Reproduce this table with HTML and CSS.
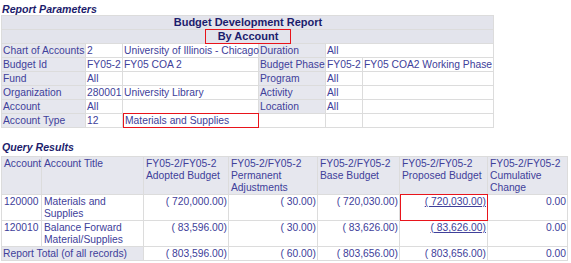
FILE: index.html
```html
<!DOCTYPE html>
<html>
<head>
<meta charset="utf-8">
<link rel="stylesheet" href="styles.css">
</head>
<body>
<div class="page">
  <div class="section-title">Report Parameters</div>
  <table class="params">
    <colgroup>
      <col class="c1"><col class="c2"><col class="c3"><col class="c4"><col class="c5"><col class="c6">
    </colgroup>
    <tr><td colspan="6" class="head">Budget Development Report</td></tr>
    <tr><td colspan="6" class="head"><span class="hl-box">By Account</span></td></tr>
    <tr><td class="lbl">Chart of Accounts</td><td>2</td><td>University of Illinois - Chicago</td><td class="lbl">Duration</td><td colspan="2">All</td></tr>
    <tr><td class="lbl">Budget Id</td><td>FY05-2</td><td>FY05 COA 2</td><td class="lbl">Budget Phase</td><td>FY05-2</td><td>FY05 COA2 Working Phase</td></tr>
    <tr><td class="lbl">Fund</td><td>All</td><td></td><td class="lbl">Program</td><td>All</td><td></td></tr>
    <tr><td class="lbl">Organization</td><td>280001</td><td>University Library</td><td class="lbl">Activity</td><td>All</td><td></td></tr>
    <tr><td class="lbl">Account</td><td>All</td><td></td><td class="lbl">Location</td><td>All</td><td></td></tr>
    <tr><td class="lbl">Account Type</td><td>12</td><td class="boxed"><span class="cell-box">Materials and Supplies</span></td><td></td><td></td><td></td></tr>
  </table>

  <div class="section-title second">Query Results</div>
  <table class="results">
    <colgroup>
      <col class="r1"><col class="r2"><col class="r3"><col class="r4"><col class="r5"><col class="r6"><col class="r7">
    </colgroup>
    <tr class="hrow">
      <td class="lbl">Account</td>
      <td class="lbl">Account Title</td>
      <td class="lbl">FY05-2/FY05-2<br>Adopted Budget</td>
      <td class="lbl">FY05-2/FY05-2<br>Permanent<br>Adjustments</td>
      <td class="lbl">FY05-2/FY05-2<br>Base Budget</td>
      <td class="lbl">FY05-2/FY05-2<br>Proposed Budget</td>
      <td class="lbl">FY05-2/FY05-2<br>Cumulative<br>Change</td>
    </tr>
    <tr class="drow">
      <td>120000</td>
      <td>Materials and<br>Supplies</td>
      <td class="num">( 720,000.00)</td>
      <td class="num">( 30.00)</td>
      <td class="num">( 720,030.00)</td>
      <td class="num boxed"><span class="cell-box num-box"><a href="#">( 720,030.00)</a></span></td>
      <td class="num">0.00</td>
    </tr>
    <tr class="drow">
      <td>120010</td>
      <td>Balance Forward<br>Material/Supplies</td>
      <td class="num">( 83,596.00)</td>
      <td class="num">( 30.00)</td>
      <td class="num">( 83,626.00)</td>
      <td class="num"><a href="#">( 83,626.00)</a></td>
      <td class="num">0.00</td>
    </tr>
    <tr class="trow">
      <td colspan="2" class="lbl">Report Total (of all records)</td>
      <td class="num">( 803,596.00)</td>
      <td class="num">( 60.00)</td>
      <td class="num">( 803,656.00)</td>
      <td class="num">( 803,656.00)</td>
      <td class="num">0.00</td>
    </tr>
  </table>
</div>
</body>
</html>
```

FILE: styles.css
```css
html, body {
  margin: 0;
  padding: 0;
  background: #ffffff;
}
.page {
  padding: 3px 0 0 1px;
  font-family: "Liberation Sans", Arial, sans-serif;
  font-size: 10.3px;
  color: #40409a;
}
.section-title {
  font-weight: bold;
  font-style: italic;
  font-size: 10.6px;
  line-height: 12px;
  color: #1c1c6c;
  padding-left: 1px;
}
.section-title.second {
  margin-top: 13px;
  margin-bottom: 3px;
}
table {
  border-collapse: collapse;
  table-layout: fixed;
}
td {
  border: 1px solid #dcdcdc;
  padding: 0 0 0 1px;
  white-space: nowrap;
  overflow: visible;
  vertical-align: top;
}
.params {
  width: 493px;
}
.params td {
  height: 13px;
  line-height: 13px;
}
.params .c1 { width: 84px; }
.params .c2 { width: 37px; }
.params .c3 { width: 136px; }
.params .c4 { width: 67px; }
.params .c5 { width: 37px; }
.params .c6 { width: auto; }
.head {
  background: #e3e4ec;
  text-align: center;
  font-weight: bold;
  font-size: 11px;
  color: #1c1c6c;
}
.lbl {
  background: #e6e7ee;
}
.hl-box {
  display: inline-block;
  border: 1px solid #e8141b;
  width: 86px;
  height: 15px;
  line-height: 13px;
  box-sizing: border-box;
  margin-top: -1px;
  margin-bottom: -1px;
  vertical-align: top;
}
.boxed {
  position: relative;
}
.cell-box {
  position: absolute;
  left: 0;
  top: -1px;
  right: -1px;
  bottom: -1px;
  border: 1px solid #e8141b;
  padding-left: 1px;
}
.results {
  width: 567px;
}
.results .r1 { width: 40px; }
.results .r2 { width: 102px; }
.results .r3 { width: 85px; }
.results .r4 { width: 89px; }
.results .r5 { width: 82px; }
.results .r6 { width: 88px; }
.results .r7 { width: auto; }
.results td {
  line-height: 12px;
}
.hrow td {
  height: 35px;
  padding-top: 1px;
  padding-left: 2px;
}
.drow td {
  height: 24px;
  padding-top: 1px;
  padding-left: 2px;
}
.trow td {
  height: 13px;
  line-height: 13px;
  padding-left: 1px;
}
.num {
  text-align: right;
  padding-right: 1px;
}
.results td.num {
  padding-right: 1px;
}
.num-box {
  text-align: right;
  padding-top: 1px;
  padding-right: 1px;
  padding-left: 0;
}
a {
  color: #40409a;
  text-decoration: underline;
}
```
